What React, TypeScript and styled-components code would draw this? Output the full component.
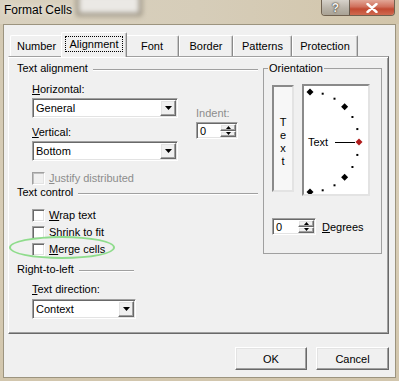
import styled, { createGlobalStyle, css } from "styled-components";

const GlobalStyle = createGlobalStyle`
  html, body {
    margin: 0;
    padding: 0;
  }
  body {
    font-family: "Liberation Sans", Arial, sans-serif;
    font-size: 11px;
    color: #000;
    background: #d6ccb6;
  }
`;

const raised = css`
  border: 1px solid;
  border-color: #fff #696969 #696969 #fff;
  box-shadow: inset -1px -1px 0 #a0a0a0, inset 1px 1px 0 #e3e3e3;
`;

const sunken = css`
  border: 1px solid;
  border-color: #a0a0a0 #fff #fff #a0a0a0;
  box-shadow: inset 1px 1px 0 #696969, inset -1px -1px 0 #e3e3e3;
`;

interface TabInfo {
  label: string;
  width: number;
  active?: boolean;
}
const tabs: TabInfo[] = [
  { label: "Number", width: 53 },
  { label: "Alignment", width: 66, active: true },
  { label: "Font", width: 54 },
  { label: "Border", width: 54 },
  { label: "Patterns", width: 59 },
  { label: "Protection", width: 66 },
];

// arc of the orientation dial, every 15 degrees from top to bottom
const dialPoints = Array.from({ length: 13 }, (_, i) => {
  const a = ((-90 + i * 15) * Math.PI) / 180;
  return {
    x: 6 + 49 * Math.cos(a),
    y: 56 + 50 * Math.sin(a),
    big: i % 3 === 0 && i !== 6,
    red: i === 6,
  };
});

const Diamond = ({ x, y, r, fill }: { x: number; y: number; r: number; fill: string }) => (
  <polygon
    points={`${x},${y - r} ${x + r},${y} ${x},${y + r} ${x - r},${y}`}
    fill={fill}
  />
);

const Combo = ({ value, width }: { value: string; width: number }) => (
  <ComboBox $width={width}>
    <ComboValue>{value}</ComboValue>
    <DropBtn>
      <svg width="7" height="4" viewBox="0 0 7 4">
        <path d="M0 0h7L3.5 4z" fill="#000" />
      </svg>
    </DropBtn>
  </ComboBox>
);

const Spin = ({ width }: { width: number }) => (
  <SpinBox $width={width}>
    <SpinValue>0</SpinValue>
    <SpinBtns>
      <SpinBtn>
        <svg width="5" height="3" viewBox="0 0 5 3">
          <path d="M2.5 0L5 3H0z" fill="#000" />
        </svg>
      </SpinBtn>
      <SpinBtn>
        <svg width="5" height="3" viewBox="0 0 5 3">
          <path d="M0 0h5L2.5 3z" fill="#000" />
        </svg>
      </SpinBtn>
    </SpinBtns>
  </SpinBox>
);

const Check = ({ children, disabled }: { children: React.ReactNode; disabled?: boolean }) => (
  <CheckRow $disabled={disabled}>
    <CheckBox $disabled={disabled} />
    <span>{children}</span>
  </CheckRow>
);

const App = () => {
  return (
    <>
      <GlobalStyle />
      <Window>
        <TitleBar>
          <Title>Format Cells</Title>
          <CaptionBtns>
            <HelpBtn>?</HelpBtn>
            <CloseBtn>
              <svg width="12" height="10" viewBox="0 0 12 10">
                <path
                  d="M1.5 1l9 8M10.5 1l-9 8"
                  stroke="#fff"
                  strokeWidth="2.4"
                  strokeLinecap="round"
                />
              </svg>
            </CloseBtn>
          </CaptionBtns>
        </TitleBar>
        <Client>
          <TabRow>
            {tabs.map(({ label, width, active }) => (
              <Tab key={label} $width={width} $active={active}>
                {active ? <Focus>{label}</Focus> : label}
              </Tab>
            ))}
          </TabRow>
          <Panel>
            <LeftCol>
              <SectionHeader>Text alignment</SectionHeader>
              <AlignBlock>
                <ComboCol>
                  <Label>
                    <u>H</u>orizontal:
                  </Label>
                  <Combo value="General" width={146} />
                  <Label $top={5}>
                    <u>V</u>ertical:
                  </Label>
                  <Combo value="Bottom" width={146} />
                </ComboCol>
                <IndentCol>
                  <Label $disabled>Indent:</Label>
                  <Spin width={42} />
                </IndentCol>
              </AlignBlock>
              <Indented $top={10}>
                <Check disabled>
                  <u>J</u>ustify distributed
                </Check>
              </Indented>
              <SectionHeader>Text control</SectionHeader>
              <Indented $top={9}>
                <Check>
                  <u>W</u>rap text
                </Check>
              </Indented>
              <Indented $top={3}>
                <Check>
                  Shrin<u>k</u> to fit
                </Check>
              </Indented>
              <Indented $top={3}>
                <Check>
                  <u>M</u>erge cells
                </Check>
                <Highlight />
              </Indented>
              <SectionHeader $width={117} $top={6}>
                Right-to-left
              </SectionHeader>
              <Indented $top={6}>
                <Label>
                  <u>T</u>ext direction:
                </Label>
                <ComboGap>
                  <Combo value="Context" width={104} />
                </ComboGap>
              </Indented>
            </LeftCol>
            <Orientation>
              <Legend>Orientation</Legend>
              <DialRow>
                <VertText>
                  <span>T</span>
                  <span>e</span>
                  <span>x</span>
                  <span>t</span>
                </VertText>
                <Dial>
                  <svg width="64" height="108" viewBox="0 0 64 108">
                    <text
                      x="4"
                      y="60"
                      fontFamily="Liberation Sans, Arial, sans-serif"
                      fontSize="11"
                      fill="#000"
                    >
                      Text
                    </text>
                    <line x1="31" y1="56.5" x2="51" y2="56.5" stroke="#000" strokeWidth="1" />
                    {dialPoints.map((p, i) =>
                      p.red ? (
                        <Diamond key={i} x={p.x} y={p.y} r={3.5} fill="#b01c1c" />
                      ) : p.big ? (
                        <Diamond key={i} x={p.x} y={p.y} r={3.5} fill="#000" />
                      ) : (
                        <rect key={i} x={p.x - 1} y={p.y - 1} width="2" height="2" fill="#000" />
                      )
                    )}
                  </svg>
                </Dial>
              </DialRow>
              <DegreesRow>
                <Spin width={44} />
                <DegLabel>
                  <u>D</u>egrees
                </DegLabel>
              </DegreesRow>
            </Orientation>
          </Panel>
          <ButtonRow>
            <Button $width={72}>OK</Button>
            <Button $width={73}>Cancel</Button>
          </ButtonRow>
        </Client>
      </Window>
    </>
  );
};

const Window = styled.div`
  width: 399px;
  height: 381px;
  display: flex;
  flex-direction: column;
  background: linear-gradient(180deg, #d3c9b3 0%, #d8cdb6 60%, #d2c6ad 100%);
  overflow: hidden;
`;

const TitleBar = styled.div`
  height: 24px;
  flex: none;
  display: flex;
  align-items: flex-start;
  padding-left: 4px;
  position: relative;
  overflow: hidden;
  background: linear-gradient(90deg, #d9d1bf 0%, #d6cdb9 50%, #d2c5aa 100%);

  /* blurred window seen through the glass */
  &::before {
    content: "";
    position: absolute;
    left: 76px;
    top: -8px;
    width: 60px;
    height: 18px;
    background: #ebe9e5;
    border: 3px solid #8e8676;
    border-radius: 3px;
    filter: blur(2.5px);
  }
`;

const Title = styled.div`
  position: relative;
  font-size: 12px;
  line-height: 14px;
  padding-top: 3px;
  color: #000;
  text-shadow: 0 0 6px rgba(255, 255, 255, 0.9);
`;

const CaptionBtns = styled.div`
  position: relative;
  margin-left: auto;
  margin-right: 4px;
  display: flex;
  height: 15px;
  border: 1px solid rgba(70, 55, 40, 0.7);
  border-top: none;
  border-radius: 0 0 4px 4px;
  overflow: hidden;
`;

const HelpBtn = styled.div`
  width: 27px;
  display: flex;
  align-items: center;
  justify-content: center;
  background: linear-gradient(180deg, #d6d2ca 0%, #b9b3a8 55%, #a9a295 100%);
  border-right: 1px solid rgba(70, 55, 40, 0.7);
  color: #f4f2ee;
  font-weight: bold;
  font-size: 12px;
  text-shadow: 0 0 2px #3c3428, 0 0 1px #3c3428;
`;

const CloseBtn = styled.div`
  width: 44px;
  display: flex;
  align-items: center;
  justify-content: center;
  background: linear-gradient(180deg, #e2a797 0%, #d0705c 45%, #c24a32 60%, #d06a50 100%);
`;

const Client = styled.div`
  flex: 1;
  margin: 0 3px 3px 3px;
  border: 1px solid #9c947f;
  background: #f0f0f0;
  padding: 7px 6px 7px 4px;
  display: flex;
  flex-direction: column;
`;

const TabRow = styled.div`
  display: flex;
  align-items: flex-end;
  height: 25px;
  margin: 0 0 -1px 2px;
  position: relative;
  z-index: 1;
`;

const Tab = styled.div<{ $width: number; $active?: boolean }>`
  box-sizing: border-box;
  width: ${(p) => p.$width}px;
  height: ${(p) => (p.$active ? 25 : 21)}px;
  margin: ${(p) => (p.$active ? "0 -2px 0 -2px" : "0 0 1px 0")};
  display: flex;
  align-items: center;
  justify-content: center;
  padding-bottom: ${(p) => (p.$active ? 2 : 0)}px;
  background: #f0f0f0;
  border-top: 1px solid #fff;
  border-left: 1px solid #fff;
  border-right: 1px solid #8a8a8a;
  border-radius: 2px 2px 0 0;
  box-shadow: inset -1px 0 0 #c8c8c8;
  position: relative;
  z-index: ${(p) => (p.$active ? 2 : 0)};
`;

const Focus = styled.span`
  padding: 1px 4px;
  border: 1px dotted #000;
`;

const Panel = styled.div`
  height: 278px;
  box-sizing: border-box;
  border: 1px solid;
  border-color: #a0a0a0 #696969 #696969 #fff;
  box-shadow: inset 0 1px 0 #fff, inset -1px -1px 0 #a0a0a0;
  padding: 4px 6px 0 8px;
  display: grid;
  grid-template-columns: 241px 119px;
  column-gap: 5px;
  align-items: start;
`;

const LeftCol = styled.div`
  display: flex;
  flex-direction: column;
`;

const SectionHeader = styled.div<{ $width?: number; $top?: number }>`
  display: flex;
  align-items: center;
  height: 14px;
  line-height: 14px;
  width: ${(p) => (p.$width ? `${p.$width}px` : "auto")};
  margin-top: ${(p) => p.$top || 0}px;
  white-space: nowrap;

  &::after {
    content: "";
    flex: 1;
    height: 1px;
    margin: 2px 0 0 5px;
    background: #a0a0a0;
    box-shadow: 0 1px 0 #fff;
  }
`;

const Label = styled.div<{ $top?: number; $disabled?: boolean }>`
  height: 14px;
  line-height: 14px;
  margin-top: ${(p) => p.$top || 0}px;
  color: ${(p) => (p.$disabled ? "#8d8d8d" : "#000")};
  white-space: nowrap;
`;

const AlignBlock = styled.div`
  display: flex;
  margin: 7px 0 0 15px;
`;

const ComboCol = styled.div`
  display: flex;
  flex-direction: column;
  gap: 2px;
`;

const IndentCol = styled.div`
  display: flex;
  flex-direction: column;
  gap: 2px;
  margin-left: 18px;
  padding-top: 24px;
`;

const ComboBox = styled.div<{ $width: number }>`
  box-sizing: border-box;
  width: ${(p) => p.$width}px;
  height: 20px;
  ${sunken};
  background: #fff;
  padding: 1px;
  display: flex;
  align-items: center;
`;

const ComboValue = styled.span`
  flex: 1;
  padding-left: 2px;
`;

const DropBtn = styled.div`
  box-sizing: border-box;
  width: 16px;
  height: 16px;
  ${raised};
  background: #f0f0f0;
  display: flex;
  align-items: center;
  justify-content: center;
`;

const SpinBox = styled.div<{ $width: number }>`
  box-sizing: border-box;
  width: ${(p) => p.$width}px;
  height: 17px;
  ${sunken};
  background: #fff;
  padding: 1px;
  display: flex;
  align-items: center;
`;

const SpinValue = styled.span`
  flex: 1;
  padding-left: 2px;
`;

const SpinBtns = styled.div`
  display: flex;
  flex-direction: column;
  width: 16px;
  height: 13px;
`;

const SpinBtn = styled.div`
  flex: 1;
  box-sizing: border-box;
  ${raised};
  background: #f0f0f0;
  display: flex;
  align-items: center;
  justify-content: center;
`;

const Indented = styled.div<{ $top?: number }>`
  margin: ${(p) => p.$top || 0}px 0 0 15px;
  position: relative;
`;

const ComboGap = styled.div`
  margin-top: 3px;
`;

const CheckRow = styled.div<{ $disabled?: boolean }>`
  height: 14px;
  display: flex;
  align-items: center;
  gap: 4px;
  color: ${(p) => (p.$disabled ? "#8d8d8d" : "#000")};
`;

const CheckBox = styled.div<{ $disabled?: boolean }>`
  box-sizing: border-box;
  width: 13px;
  height: 13px;
  ${sunken};
  background: ${(p) => (p.$disabled ? "#f0f0f0" : "#fff")};
  ${(p) =>
    p.$disabled &&
    `box-shadow: inset 1px 1px 0 #c0c0c0, inset -1px -1px 0 #e3e3e3;`}
`;

const Highlight = styled.div`
  position: absolute;
  left: -23px;
  top: -6px;
  width: 106px;
  height: 23px;
  box-sizing: border-box;
  border: 2px solid #8fdc8c;
  border-radius: 50%;
  filter: blur(0.3px);
  pointer-events: none;
`;

const Orientation = styled.fieldset`
  margin: 0;
  padding: 0 0 18px 0;
  border: 1px solid #a0a0a0;
  min-inline-size: 0;
`;

const Legend = styled.legend`
  margin-left: 4px;
  padding: 0 1px;
  height: 14px;
  line-height: 14px;
`;

const DialRow = styled.div`
  display: flex;
  align-items: flex-start;
  gap: 8px;
  margin: 9px 0 0 8px;
`;

const VertText = styled.div`
  box-sizing: border-box;
  width: 22px;
  height: 107px;
  margin-top: 1px;
  border: 2px solid;
  border-color: #8a8a8a #e3e3e3 #e3e3e3 #8a8a8a;
  background: #f7f7f7;
  display: flex;
  flex-direction: column;
  align-items: center;
  padding-top: 29px;
  line-height: 13px;
`;

const Dial = styled.div`
  box-sizing: border-box;
  width: 68px;
  height: 112px;
  border: 2px solid;
  border-color: #8a8a8a #e3e3e3 #e3e3e3 #8a8a8a;
  background: #fff;
  display: flex;

  svg {
    display: block;
  }
`;

const DegreesRow = styled.div`
  display: flex;
  align-items: center;
  margin: 22px 0 0 8px;
`;

const DegLabel = styled.span`
  margin-left: 6px;
`;

const ButtonRow = styled.div`
  display: flex;
  justify-content: flex-end;
  gap: 9px;
  margin-top: 13px;
`;

const Button = styled.div<{ $width: number }>`
  box-sizing: border-box;
  width: ${(p) => p.$width}px;
  height: 23px;
  ${raised};
  background: #f0f0f0;
  display: flex;
  align-items: center;
  justify-content: center;
`;

export default App;
